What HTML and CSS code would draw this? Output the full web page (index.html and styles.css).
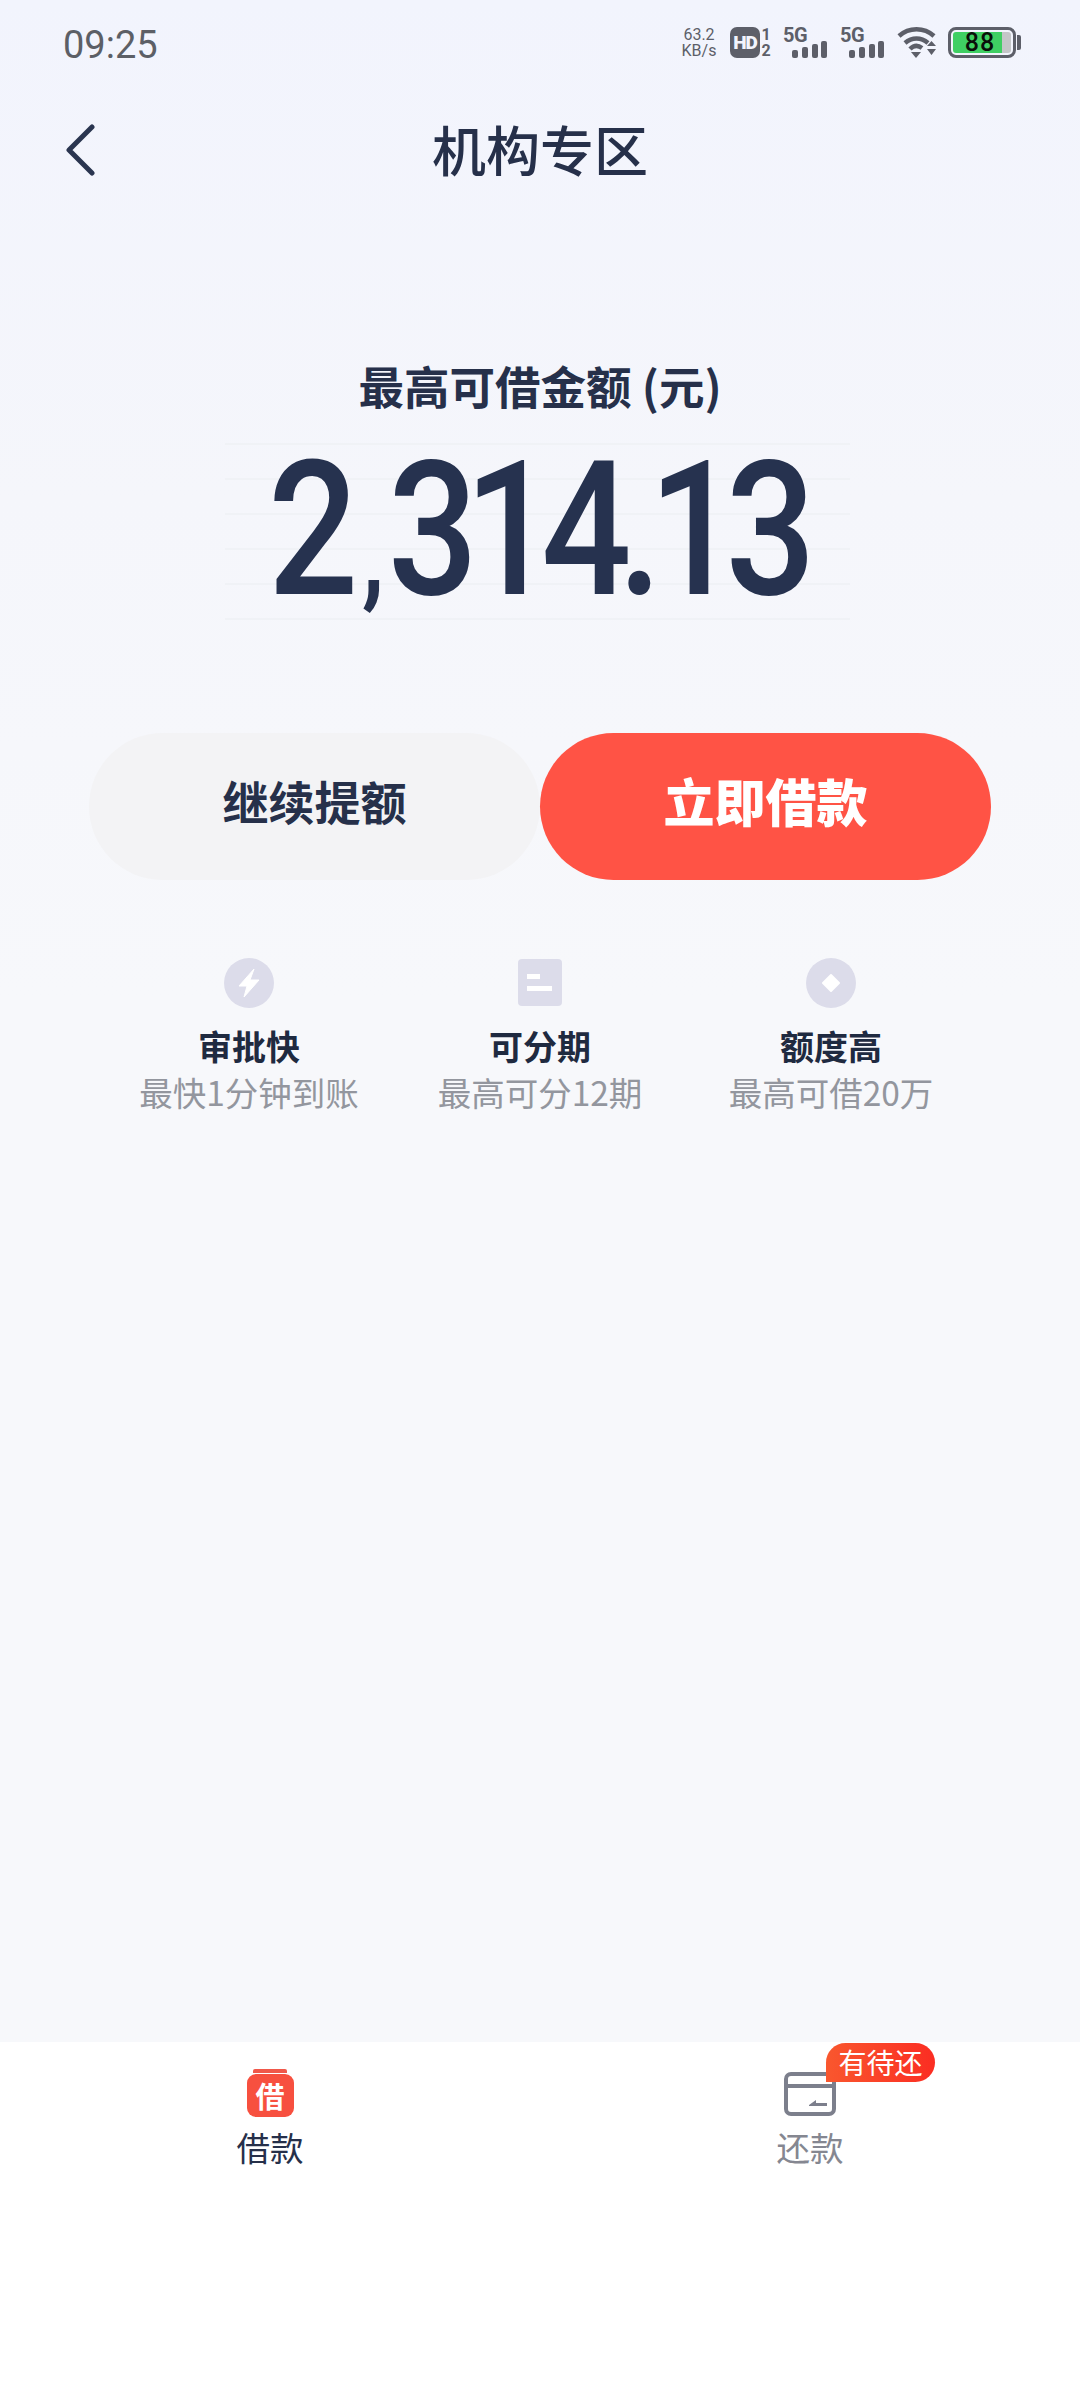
FILE: index.html
```html
<!DOCTYPE html>
<html lang="zh-CN">
<head>
  <meta charset="UTF-8" />
  <meta name="viewport" content="width=device-width, initial-scale=1" />
  <title>机构专区</title>
  <link rel="stylesheet" href="styles.css">
</head>
<body>

<div class="page">
  <div class="status-bar">
    <span class="time">09:25</span>
    <div class="status-icons">
      <div class="speed"><span>63.2</span><span>KB/s</span></div>
      <div class="hd-wrap">
        <span class="hd">HD</span>
        <div class="sim-num"><span>1</span><span>2</span></div>
      </div>
      <div class="signal">
        <span class="signal-label">5G</span>
        <svg class="signal-bars" width="35" height="17" viewBox="0 0 35 17"><rect x="0" y="9" width="6" height="8" rx="2"/><rect x="10" y="6" width="6" height="11" rx="2"/><rect x="20" y="3" width="6" height="14" rx="2"/><rect x="29" y="0" width="6" height="17" rx="2"/></svg>
      </div>
      <div class="signal">
        <span class="signal-label">5G</span>
        <svg class="signal-bars" width="35" height="17" viewBox="0 0 35 17"><rect x="0" y="9" width="6" height="8" rx="2"/><rect x="10" y="6" width="6" height="11" rx="2"/><rect x="20" y="3" width="6" height="14" rx="2"/><rect x="29" y="0" width="6" height="17" rx="2"/></svg>
      </div>
      <svg class="wifi" width="40" height="31" viewBox="0 0 40 31">
        <path d="M2 9C12 0 27 0 37 9" fill="none" stroke="#5d5f69" stroke-width="4.5"/>
        <path d="M8 16C15 10 24 10 31 16" fill="none" stroke="#5d5f69" stroke-width="4.5"/>
        <path d="M13 22C17 18 21 18 25 21" fill="none" stroke="#5d5f69" stroke-width="4.5"/>
        <path d="M14 25L24 25L19 31Z" fill="#5d5f69"/>
        <path d="M30 19L39 19L34.500 14Z M30 22L39 22L34.500 28Z" fill="#5d5f69"/>
      </svg>
      <div class="battery">
        <div class="battery-body">
          <div class="battery-fill">88</div>
        </div>
        <div class="battery-nub"></div>
      </div>
    </div>
  </div>

  <div class="nav">
    <svg class="back" width="32" height="52" viewBox="0 0 32 52"><path d="M28 3L5 26L28 49" fill="none" stroke="#2a3550" stroke-width="5" stroke-linecap="round" stroke-linejoin="round"/></svg>
    <h1 class="nav-title">机构专区</h1>
    <div></div>
  </div>

  <main class="main">
    <div class="quota-label">最高可借金额 (元)</div>
    <div class="amount"><span class="amount-num">2<span class="comma">,</span>314.13</span></div>

    <div class="actions">
      <button class="btn btn-gray">继续提额</button>
      <button class="btn btn-red">立即借款</button>
    </div>

    <div class="features">
      <div class="feature">
        <svg class="feature-icon" width="50" height="50" viewBox="0 0 50 50"><circle cx="25" cy="25" r="25" fill="#dcdcea"/><path d="M30 11L15 28H23L20 39L35 22H26Z" fill="#fff" stroke="#fff" stroke-width="1" stroke-linejoin="round"/></svg>
        <div class="feature-title">审批快</div>
        <div class="feature-sub">最快1分钟到账</div>
      </div>
      <div class="feature">
        <svg class="feature-icon" width="44" height="50" viewBox="0 0 44 50"><rect x="0" y="1" width="44" height="47" rx="4" fill="#dcdcea"/><rect x="9" y="16" width="13" height="5" fill="#fff"/><rect x="9" y="28" width="25" height="5" fill="#fff"/></svg>
        <div class="feature-title">可分期</div>
        <div class="feature-sub">最高可分12期</div>
      </div>
      <div class="feature">
        <svg class="feature-icon" width="50" height="50" viewBox="0 0 50 50"><circle cx="25" cy="25" r="25" fill="#dcdcea"/><path d="M25 17L33 25L25 33L17 25Z" fill="#fff" stroke="#fff" stroke-width="2" stroke-linejoin="round"/></svg>
        <div class="feature-title">额度高</div>
        <div class="feature-sub">最高可借20万</div>
      </div>
    </div>
  </main>

  <nav class="tabbar">
    <div class="tab tab-active">
      <div class="tab-icon">
        <div class="loan-top"></div>
        <div class="loan-icon">借</div>
      </div>
      <div class="tab-label">借款</div>
    </div>
    <div class="tab">
      <div class="tab-icon">
        <svg width="52" height="44" viewBox="0 0 52 44"><rect x="2" y="2" width="48" height="40" rx="5" fill="none" stroke="#7c7f8c" stroke-width="4"/><path d="M2 14H50" stroke="#7c7f8c" stroke-width="4"/><path d="M25 33L32 28V31H43V34H25Z" fill="#7c7f8c"/></svg>
        <span class="badge">有待还</span>
      </div>
      <div class="tab-label">还款</div>
    </div>
  </nav>
</div>

</body>
</html>
```

FILE: styles.css
```css
* {
  box-sizing: border-box;
}
body {
  margin: 0;
  font-family: "Noto Sans CJK SC", Roboto, sans-serif;
  color: #26304a;
}
.page {
  width: 1080px;
  height: 2408px;
  display: flex;
  flex-direction: column;
  background: linear-gradient(#f2f4fd 0, #f5f6fb 500px, #f7f8fb 1000px);
}

/* status bar */
.status-bar {
  height: 90px;
  padding: 22px 59px 0 63px;
  display: flex;
  justify-content: space-between;
  align-items: flex-start;
}
.time {
  font-family: Roboto, sans-serif;
  font-size: 38px;
  line-height: 46px;
  color: #5c5f66;
}
.status-icons {
  display: flex;
  align-items: flex-start;
  padding-top: 5px;
  color: #5d5f69;
  font-family: Roboto, sans-serif;
}
.speed {
  width: 38px;
  margin-right: 12px;
  display: flex;
  flex-direction: column;
  align-items: center;
  font-size: 16px;
  line-height: 16px;
}
.hd-wrap {
  display: flex;
  margin-right: 11px;
}
.hd {
  width: 30px;
  height: 31px;
  border-radius: 7px;
  background: #5d5f69;
  color: #f2f4fd;
  font-size: 19px;
  font-weight: 900;
  line-height: 31px;
  text-align: center;
  letter-spacing: -1px;
}
.sim-num {
  width: 12px;
  display: flex;
  flex-direction: column;
  align-items: center;
  font-size: 16px;
  font-weight: 700;
  line-height: 16px;
}
.signal {
  width: 44px;
  height: 31px;
  margin-right: 13px;
  position: relative;
}
.signal-label {
  position: absolute;
  left: 0;
  top: -2px;
  font-size: 20px;
  font-weight: 700;
  line-height: 20px;
  letter-spacing: -0.5px;
}
.signal-bars {
  position: absolute;
  left: 9px;
  bottom: 0;
  fill: #5d5f69;
}
.wifi {
  margin-right: 11px;
}
.battery {
  display: flex;
  align-items: center;
  height: 31px;
}
.battery-body {
  width: 68px;
  height: 31px;
  border: 3px solid #5d5f69;
  border-radius: 8px;
  padding: 2px;
}
.battery-fill {
  height: 100%;
  border-radius: 3px;
  background: linear-gradient(90deg, #3fcf63 0, #3fcf63 85%, #c4c6c8 85%);
  color: #0a0f0a;
  font-size: 25px;
  font-weight: 500;
  line-height: 21px;
  text-align: center;
  padding-right: 4px;
  letter-spacing: 1px;
}
.battery-nub {
  width: 4px;
  height: 15px;
  margin-left: 1px;
  background: #5d5f69;
  border-radius: 0 2px 2px 0;
}

/* title row */
.nav {
  height: 120px;
  padding-left: 64px;
  display: grid;
  grid-template-columns: 1fr auto 1fr;
  align-items: center;
}
.nav-title {
  margin: 0;
  font-size: 54px;
  font-weight: 500;
  line-height: 70px;
  transform: translate(-32px, -1px);
}

/* hero */
.main {
  flex: 1;
  display: flex;
  flex-direction: column;
  align-items: center;
  padding-top: 145px;
}
.quota-label {
  font-size: 45.500px;
  font-weight: 700;
  line-height: 60px;
  height: 60px;
}
.amount {
  width: 625px;
  height: 177px;
  margin: 28px 0 113px -6px;
  display: flex;
  justify-content: center;
  align-items: center;
  background: repeating-linear-gradient(#f0f2f6 0, #f0f2f6 2px, transparent 2px, transparent 35px);
}
.amount-num {
  display: inline-block;
  font-family: Roboto, sans-serif;
  font-size: 188px;
  font-weight: 500;
  line-height: 150px;
  letter-spacing: -16px;
  color: #26324f;
  white-space: nowrap;
  transform: translate(-2px, 10px) scaleX(0.845);
}
.comma {
  font-size: 120px;
  letter-spacing: 0;
  margin: 0 4px 0 20px;
}

/* buttons */
.actions {
  display: flex;
  width: 1080px;
  padding: 0 89px 0 89px;
  height: 147px;
}
.btn {
  flex: 1;
  border: none;
  border-radius: 74px;
  font-family: inherit;
  font-weight: 700;
  padding: 0 0 14px;
  line-height: 60px;
}
.btn-gray {
  background: #f3f3f5;
  color: #26304a;
  font-size: 46px;
}
.btn-red {
  background: #ff5345;
  color: #fff;
  font-size: 51px;
  font-weight: 900;
}

/* selling points */
.features {
  display: grid;
  grid-template-columns: repeat(3, 291px);
  margin-top: 78px;
}
.feature {
  display: flex;
  flex-direction: column;
  align-items: center;
}
.feature-icon {
  display: block;
}
.feature-title {
  margin-top: 16px;
  font-size: 34px;
  font-weight: 700;
  line-height: 44px;
  color: #1f2a40;
}
.feature-sub {
  margin-top: 1px;
  font-size: 33.500px;
  line-height: 46px;
  color: #93969e;
}

/* bottom tabs */
.tabbar {
  height: 366px;
  background: #fff;
  display: grid;
  grid-template-columns: 1fr 1fr;
  align-items: start;
  padding-top: 27px;
}
.tab {
  display: flex;
  flex-direction: column;
  align-items: center;
  color: #858791;
}
.tab-active {
  color: #26304a;
}
.tab-icon {
  position: relative;
  width: 52px;
  height: 50px;
  display: flex;
  flex-direction: column;
  align-items: center;
}
.loan-top {
  width: 34px;
  height: 4px;
  border-radius: 2px 2px 0 0;
  background: #f0584a;
  margin-bottom: 1px;
}
.loan-icon {
  width: 47px;
  height: 43px;
  border-radius: 9px;
  background: #f7503f;
  color: #fff;
  font-size: 29px;
  font-weight: 700;
  line-height: 43px;
  text-align: center;
}
.tab-icon svg {
  margin-top: 3px;
  display: block;
}
.badge {
  position: absolute;
  left: 42px;
  top: -26px;
  width: 109px;
  height: 39px;
  border-radius: 20px 20px 20px 0;
  background: linear-gradient(90deg, #f9572e, #fb2d22);
  color: #fff;
  font-size: 28px;
  line-height: 38px;
  text-align: center;
}
.tab-label {
  margin-top: 6px;
  font-size: 33.500px;
  line-height: 44px;
}
```
